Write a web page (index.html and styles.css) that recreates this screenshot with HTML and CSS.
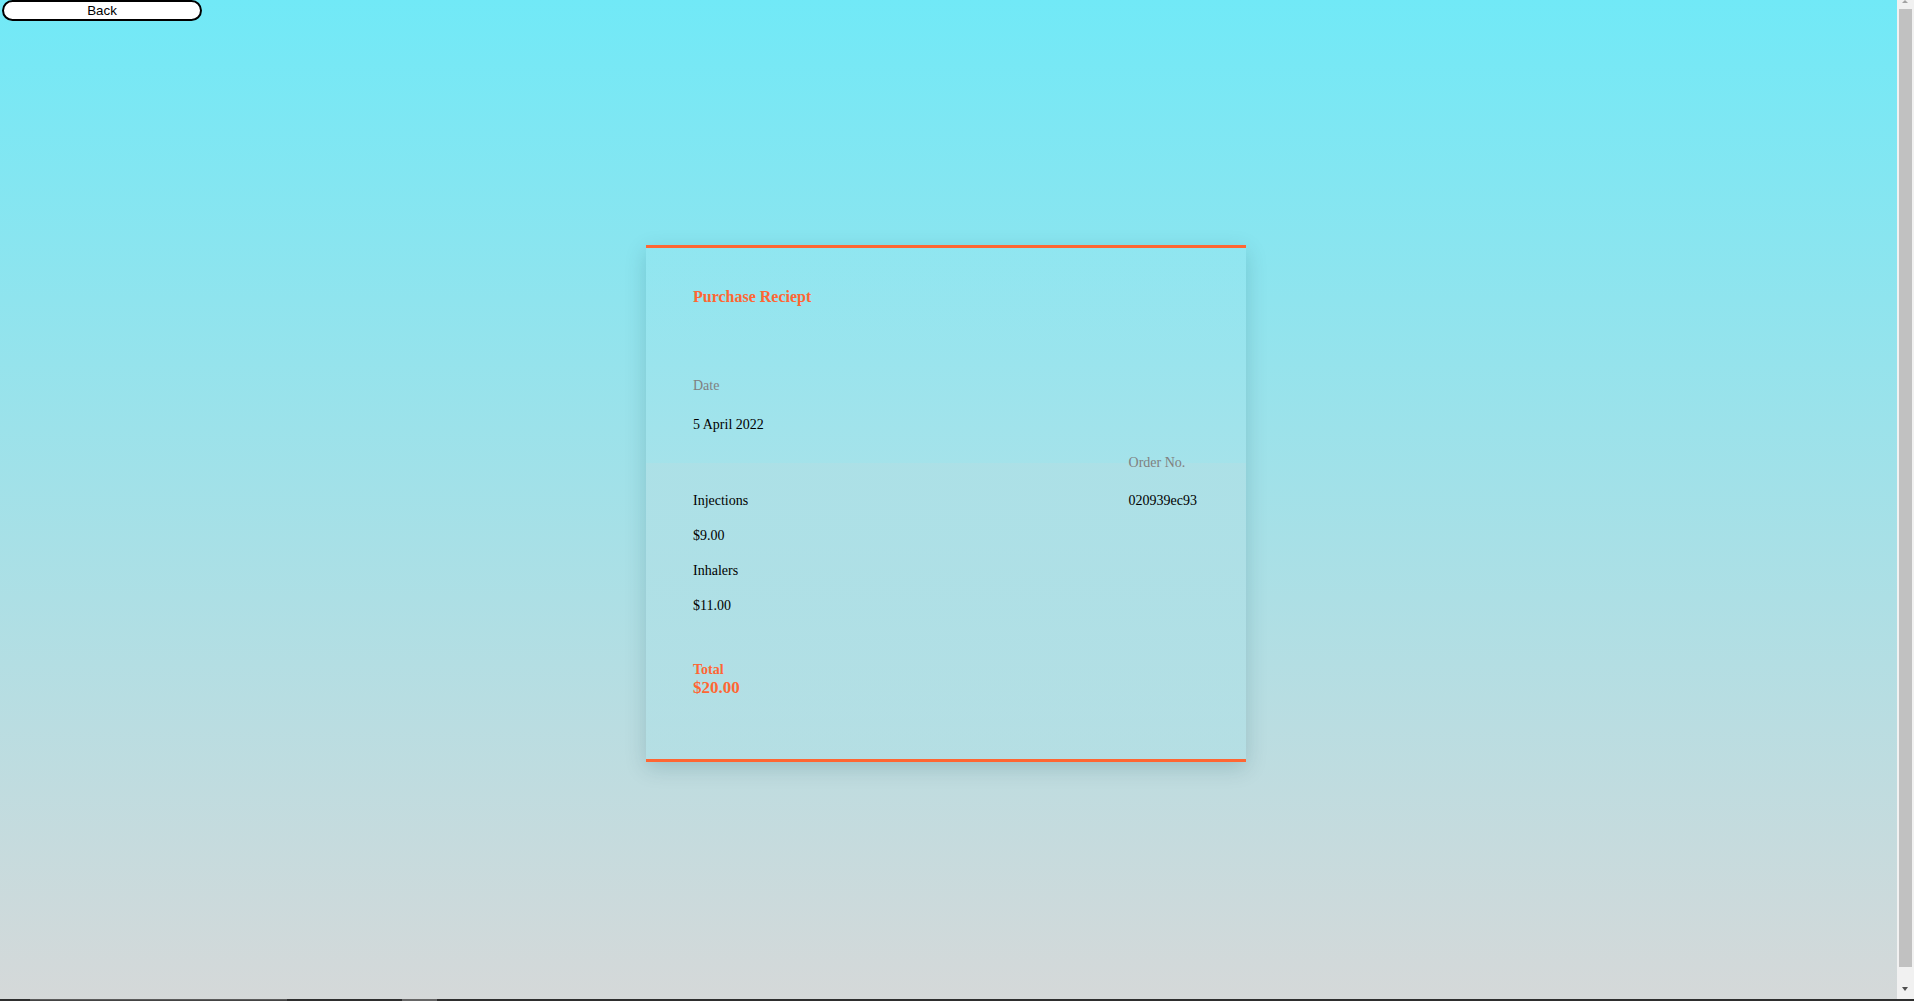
FILE: index.html
```html
<!DOCTYPE html>
<html lang="en">
<head>
<meta charset="utf-8">
<title>Purchase Reciept</title>
<link rel="stylesheet" href="styles.css">
</head>
<body>
<button class="back" type="button">Back</button>
<main class="stage">
  <section class="receipt">
    <h1 class="title">Purchase Reciept</h1>
    <div class="details">
      <div class="col-left">
        <p class="label">Date</p>
        <p class="value date">5 April 2022</p>
        <ul class="items">
          <li>Injections</li>
          <li>$9.00</li>
          <li>Inhalers</li>
          <li>$11.00</li>
        </ul>
      </div>
      <div class="col-right">
        <p class="label">Order No.</p>
        <p class="value order">020939ec93</p>
      </div>
    </div>
    <div class="total">
      <p class="total-label">Total</p>
      <p class="total-amount">$20.00</p>
    </div>
  </section>
</main>
<div class="scrollbar" aria-hidden="true">
  <span class="arrow arrow-up"></span>
  <span class="thumb"></span>
  <span class="arrow arrow-down"></span>
</div>
<div class="taskbar-edge" aria-hidden="true">
  <span class="seg seg-a"></span>
  <span class="seg seg-b"></span>
</div>
</body>
</html>
```

FILE: styles.css
```css
html {
  min-height: 100%;
}

body {
  margin: 0;
  font-family: "Liberation Serif", "Times New Roman", serif;
  background: linear-gradient(to bottom, #71e9f7 0%, #d8d8d8 100%);
  color: #000;
}

.back {
  display: block;
  box-sizing: border-box;
  width: 200px;
  height: 21px;
  margin: 0 0 0 2px;
  padding: 1px 6px;
  border: 2px solid #000;
  border-radius: 12px;
  background: #fff;
  color: #000;
  font-family: "Liberation Sans", Arial, sans-serif;
  font-size: 13.33px;
  line-height: 15px;
}

.stage {
  display: flex;
  justify-content: center;
  padding: 224px 22px 265px 0;
}

.receipt {
  box-sizing: border-box;
  width: 600px;
  border-top: 3px solid #ff6633;
  border-bottom: 3px solid #ff6633;
  padding: 40px 49px 61px 47px;
  background: linear-gradient(to bottom,
    rgba(255, 255, 255, 0.05) 0,
    rgba(255, 255, 255, 0.05) 215px,
    rgba(176, 224, 230, 0.78) 215px,
    rgba(176, 224, 230, 0.6) 100%);
  box-shadow: 0 6px 20px rgba(0, 60, 70, 0.18);
}

.title {
  margin: 0;
  font-size: 16px;
  line-height: 18px;
  font-weight: bold;
  color: #ff6633;
}

.details {
  display: flex;
  justify-content: space-between;
  align-items: flex-start;
  margin-top: 72px;
}

.label,
.value,
.items li,
.total-label,
.total-amount {
  margin: 0;
  font-size: 14px;
  line-height: 16px;
}

.label {
  color: #808080;
}

.value {
  color: #000;
}

.date {
  margin-top: 23px;
}

.items {
  list-style: none;
  margin: 60px 0 0;
  padding: 0;
  display: flex;
  flex-direction: column;
  gap: 19px;
}

.col-right {
  margin-top: 77px;
}

.order {
  margin-top: 22px;
}

.total {
  margin-top: 48px;
  color: #ff6633;
  font-weight: bold;
}

.total-amount {
  font-size: 17px;
  line-height: 20px;
}

/* window chrome drawn over the page */
.scrollbar {
  position: fixed;
  top: 0;
  right: 0;
  bottom: 0;
  width: 17px;
  background: #f1f1f1;
}

.thumb {
  position: absolute;
  top: 9px;
  left: 2px;
  width: 13px;
  height: 958px;
  background: #c1c1c1;
}

.arrow {
  position: absolute;
  left: 5px;
  width: 0;
  height: 0;
  border-left: 3.5px solid transparent;
  border-right: 3.5px solid transparent;
}

.arrow-up {
  top: 0;
  border-bottom: 3px solid #a3a3a3;
}

.arrow-down {
  bottom: 10px;
  border-top: 4px solid #505050;
}

.taskbar-edge {
  position: fixed;
  left: 0;
  right: 0;
  bottom: 0;
  height: 2px;
  background: #2e2e2e;
}

.seg {
  position: absolute;
  top: 0;
  height: 2px;
}

.seg-a {
  left: 30px;
  width: 257px;
  background: #444;
  border-top: 1px solid #5a5a5a;
  box-sizing: border-box;
}

.seg-b {
  left: 402px;
  width: 35px;
  background: #666;
}
```
